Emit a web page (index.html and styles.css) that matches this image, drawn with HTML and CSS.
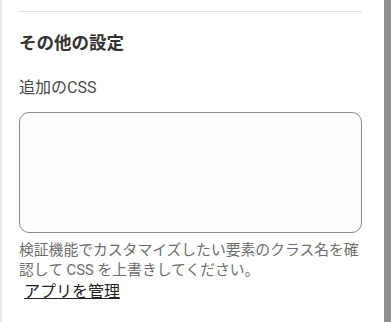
FILE: index.html
```html
<!DOCTYPE html>
<html lang="ja">
<head>
    <meta charset="UTF-8">
    <meta name="viewport" content="width=device-width, initial-scale=1.0">
    <title>その他の設定</title>
    <link rel="stylesheet" href="styles.css">
</head>
<body>
    <div class="page">
        <div class="edge"></div>
        <div class="panel">
            <hr class="divider">
            <h2 class="section-title">その他の設定</h2>
            <label class="field-label" for="custom-css">追加のCSS</label>
            <textarea id="custom-css" class="css-input"></textarea>
            <p class="help-text">検証機能でカスタマイズしたい要素のクラス名を確認して CSS を上書きしてください。</p>
            <a class="manage-link" href="#">アプリを管理</a>
        </div>
        <div class="scrollbar"></div>
    </div>
</body>
</html>
```

FILE: styles.css
```css
body {
    margin: 0;
    background: #fff;
    font-family: "Roboto", "Noto Sans CJK JP", sans-serif;
}
.page {
    display: flex;
    height: 322px;
}
.edge {
    width: 2px;
    background: #e6e6e6;
}
.panel {
    flex: 1;
    padding: 0 22px 0 17px;
}
.scrollbar {
    width: 7px;
    background: #8f8f8f;
}
.divider {
    margin: 11px 0 0;
    border: 0;
    border-top: 1px solid #e3e3e3;
}
.section-title {
    margin: 19px 0 0;
    font-size: 17.5px;
    line-height: 24px;
    font-weight: bold;
    color: #333;
}
.field-label {
    display: block;
    margin-top: 21px;
    font-size: 16px;
    line-height: 24px;
    color: #4a4a4a;
}
.css-input {
    display: block;
    box-sizing: border-box;
    width: 100%;
    height: 121px;
    margin-top: 12px;
    border: 1px solid #8a8a8a;
    border-radius: 10px;
    background: #fdfdfd;
    resize: none;
}
.help-text {
    margin: 7px 0 0;
    font-size: 14.8px;
    line-height: 20px;
    color: #6e6e6e;
}
.manage-link {
    display: inline-block;
    padding-left: 5px;
    font-size: 16px;
    line-height: 24px;
    color: #222;
    text-decoration: underline;
}
```
